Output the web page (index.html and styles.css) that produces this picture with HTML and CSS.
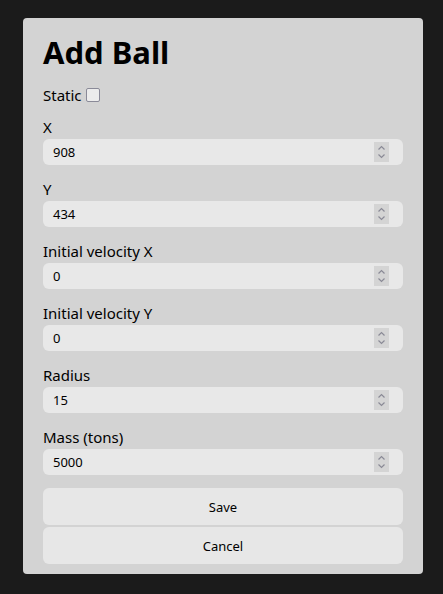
FILE: index.html
```html
<!DOCTYPE html>
<html>
<head>
<meta charset="utf-8">
<link rel="stylesheet" href="styles.css">
</head>
<body>
<div class="panel">
  <h1 class="title">Add Ball</h1>
  <div class="static-row"><span>Static</span><span class="checkbox"></span></div>
  <div class="field">
    <div class="label">X</div>
    <div class="input"><span>908</span><span class="spin"><svg width="15" height="20" viewBox="0 0 15 20"><path d="M4.5 7.5 L7.5 4.5 L10.5 7.5 M4.5 12.5 L7.5 15.5 L10.5 12.5" fill="none" stroke="#8a8a96" stroke-width="1.2"/></svg></span></div>
  </div>
  <div class="field">
    <div class="label">Y</div>
    <div class="input"><span>434</span><span class="spin"><svg width="15" height="20" viewBox="0 0 15 20"><path d="M4.5 7.5 L7.5 4.5 L10.5 7.5 M4.5 12.5 L7.5 15.5 L10.5 12.5" fill="none" stroke="#8a8a96" stroke-width="1.2"/></svg></span></div>
  </div>
  <div class="field">
    <div class="label">Initial velocity X</div>
    <div class="input"><span>0</span><span class="spin"><svg width="15" height="20" viewBox="0 0 15 20"><path d="M4.5 7.5 L7.5 4.5 L10.5 7.5 M4.5 12.5 L7.5 15.5 L10.5 12.5" fill="none" stroke="#8a8a96" stroke-width="1.2"/></svg></span></div>
  </div>
  <div class="field">
    <div class="label">Initial velocity Y</div>
    <div class="input"><span>0</span><span class="spin"><svg width="15" height="20" viewBox="0 0 15 20"><path d="M4.5 7.5 L7.5 4.5 L10.5 7.5 M4.5 12.5 L7.5 15.5 L10.5 12.5" fill="none" stroke="#8a8a96" stroke-width="1.2"/></svg></span></div>
  </div>
  <div class="field">
    <div class="label">Radius</div>
    <div class="input"><span>15</span><span class="spin"><svg width="15" height="20" viewBox="0 0 15 20"><path d="M4.5 7.5 L7.5 4.5 L10.5 7.5 M4.5 12.5 L7.5 15.5 L10.5 12.5" fill="none" stroke="#8a8a96" stroke-width="1.2"/></svg></span></div>
  </div>
  <div class="field">
    <div class="label">Mass (tons)</div>
    <div class="input"><span>5000</span><span class="spin"><svg width="15" height="20" viewBox="0 0 15 20"><path d="M4.5 7.5 L7.5 4.5 L10.5 7.5 M4.5 12.5 L7.5 15.5 L10.5 12.5" fill="none" stroke="#8a8a96" stroke-width="1.2"/></svg></span></div>
  </div>
  <div class="buttons">
    <button class="btn">Save</button>
    <button class="btn">Cancel</button>
  </div>
</div>
</body>
</html>
```
FILE: styles.css
```css
html, body {
  margin: 0;
  padding: 0;
  background: #1b1b1b;
  height: 100%;
}
body {
  font-family: "Noto Sans", "Open Sans", sans-serif;
  color: #000;
  padding: 18px 20px 0 23px;
  box-sizing: border-box;
}
.panel {
  width: 400px;
  height: 556px;
  box-sizing: border-box;
  background: #d3d3d3;
  border-radius: 4px;
  padding: 14px 20px 10px 20px;
  display: flex;
  flex-direction: column;
}
.title {
  margin: 0;
  font-size: 31px;
  font-weight: 700;
  line-height: 40px;
}
.static-row {
  display: flex;
  align-items: center;
  gap: 4px;
  font-size: 15px;
  line-height: 20px;
  margin-top: 13px;
}
.checkbox {
  width: 12px;
  height: 12px;
  border: 1.5px solid #8a8a98;
  border-radius: 2px;
  background: #ececec;
}
.field {
  margin-top: 12px;
  display: flex;
  flex-direction: column;
}
.field + .field {
  margin-top: 14px;
}
.label {
  font-size: 15px;
  line-height: 20px;
  margin-bottom: 2px;
}
.input {
  height: 26px;
  background: #e8e8e8;
  border-radius: 6px;
  display: flex;
  align-items: center;
  justify-content: space-between;
  padding: 0 14px 0 10px;
  font-size: 13px;
}
.spin {
  width: 15px;
  height: 20px;
  background: #d4d4d4;
  display: flex;
}
.buttons {
  margin-top: 13px;
  display: flex;
  flex-direction: column;
  gap: 2px;
}
.btn {
  height: 37px;
  border: none;
  border-radius: 6px;
  background: #e7e7e7;
  font-family: inherit;
  font-size: 13px;
  color: #000;
}
```
